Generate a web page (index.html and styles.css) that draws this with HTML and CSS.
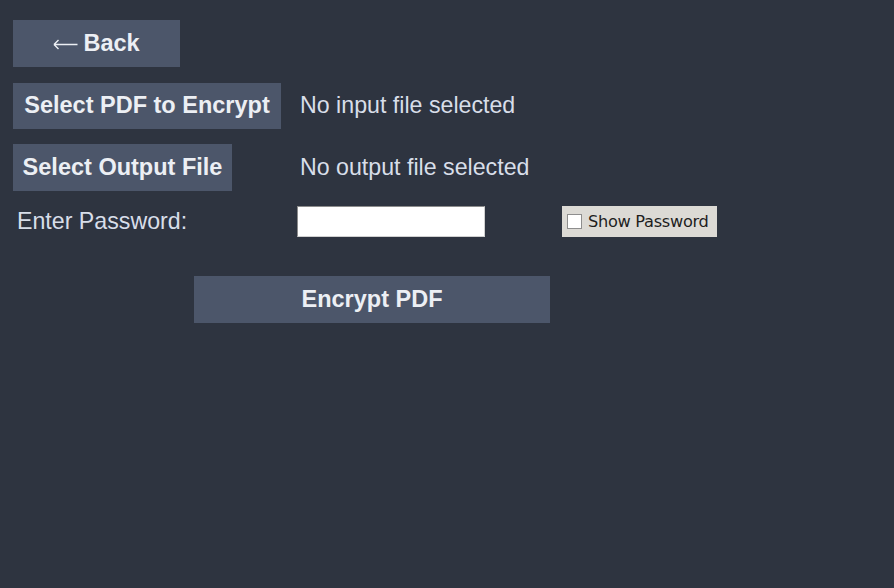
FILE: index.html
```html
<!DOCTYPE html>
<html>
<head>
<meta charset="utf-8">
<link rel="stylesheet" href="styles.css">
</head>
<body>
<div class="app">
  <div class="row row-back">
    <button class="btn btn-back"><svg class="arrow" width="25" height="11" viewBox="0 0 25 11" aria-label="←"><path d="M1 5.5 H24.5 M1 5.5 L5.5 1 M1 5.5 L5.5 10" fill="none" stroke="#eceff4" stroke-width="1.4"/></svg>Back</button>
  </div>
  <div class="row row-file">
    <div class="cell-left"><button class="btn btn-input">Select PDF to Encrypt</button></div>
    <span class="status">No input file selected</span>
  </div>
  <div class="row row-file">
    <div class="cell-left"><button class="btn btn-output">Select Output File</button></div>
    <span class="status">No output file selected</span>
  </div>
  <div class="row row-pass">
    <div class="cell-left"><span class="label">Enter Password:</span></div>
    <input class="entry" type="password">
    <label class="check"><span class="box"></span><span class="check-text">Show Password</span></label>
  </div>
  <div class="row row-encrypt">
    <button class="btn btn-encrypt">Encrypt PDF</button>
  </div>
</div>
</body>
</html>
```

FILE: styles.css
```css
html, body {
  margin: 0;
  padding: 0;
  background: #2e3440;
  width: 894px;
  height: 588px;
  overflow: hidden;
}

.app {
  padding: 20px 0 0 13px;
  display: flex;
  flex-direction: column;
  font-family: "Liberation Sans", Arial, sans-serif;
}

.row {
  display: flex;
  align-items: center;
}

.row-back { height: 47px; }
.row-file { height: 47px; margin-top: 15px; }
.row-file + .row-file { margin-top: 15px; }
.row-pass { height: 31px; margin-top: 15px; }
.row-encrypt { height: 47px; margin-top: 39px; }

.cell-left {
  width: 284px;
  flex: none;
  display: flex;
  align-items: center;
}

.btn {
  background: #4c566a;
  color: #eceff4;
  border: none;
  margin: 0;
  padding: 0;
  font-family: "Liberation Sans", Arial, sans-serif;
  font-weight: bold;
  font-size: 23.5px;
  height: 47px;
  display: flex;
  align-items: center;
  justify-content: center;
  white-space: nowrap;
}

.arrow {
  margin-right: 5px;
  margin-top: 1px;
}

.btn-back { width: 167px; }
.btn-input { width: 268px; height: 46px; }
.btn-output { width: 219px; }
.btn-encrypt { width: 356px; margin-left: 181px; }

.status {
  color: #d8dee9;
  font-size: 23.2px;
  margin-left: 3px;
  white-space: nowrap;
}

.label {
  color: #d8dee9;
  font-size: 23.2px;
  margin-left: 4px;
  white-space: nowrap;
}

.entry {
  box-sizing: border-box;
  width: 188px;
  height: 31px;
  margin: 0;
  background: #ffffff;
  border: 1px solid #8c8c8c;
  border-right-color: #d0d0d0;
  border-bottom-color: #d0d0d0;
  padding: 0 3px;
  outline: none;
}

.check {
  box-sizing: border-box;
  margin-left: 77px;
  width: 155px;
  height: 31px;
  background: #dcdad5;
  display: flex;
  align-items: center;
  padding-left: 5px;
}

.box {
  box-sizing: border-box;
  width: 15px;
  height: 15px;
  background: #ffffff;
  border: 1px solid #8e8e8e;
  flex: none;
}

.check-text {
  margin-left: 6px;
  font-family: "DejaVu Sans", sans-serif;
  font-size: 16.2px;
  color: #1e1e1e;
  white-space: nowrap;
  letter-spacing: -0.3px;
}
```
